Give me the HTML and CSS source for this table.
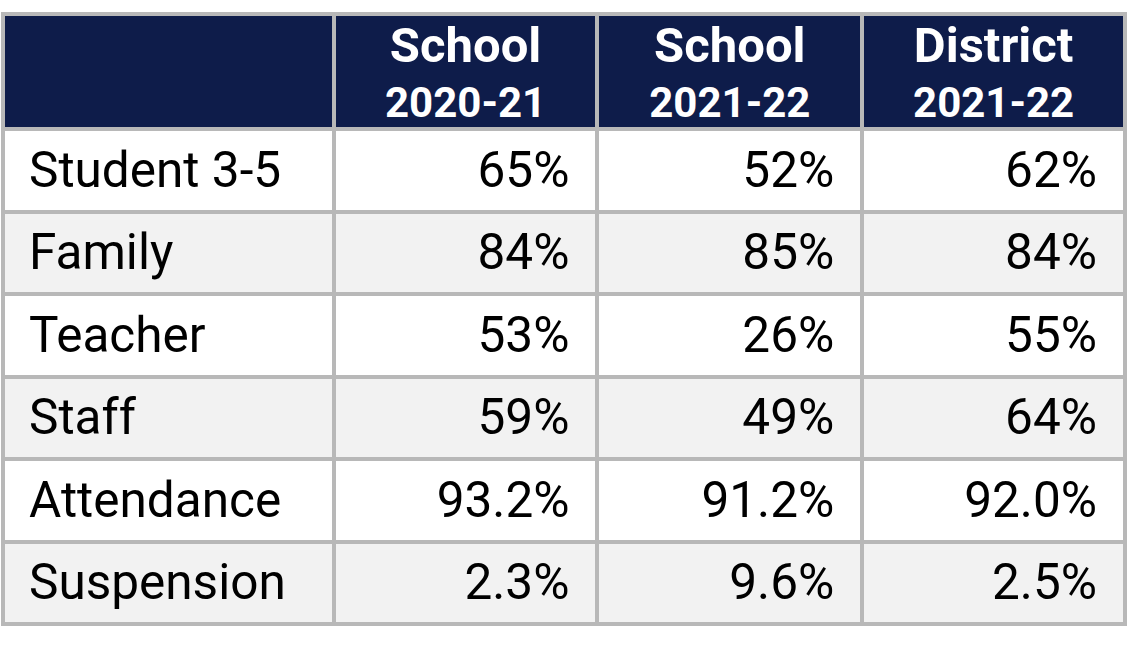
FILE: index.html
```html
<!DOCTYPE html>
<html>
<head>
<meta charset="utf-8">
<link rel="stylesheet" href="styles.css">
</head>
<body>
<table class="stats">
  <thead>
    <tr>
      <th class="corner"></th>
      <th><div class="h1">School</div><div class="h2">2020-21</div></th>
      <th><div class="h1">School</div><div class="h2">2021-22</div></th>
      <th><div class="h1">District</div><div class="h2">2021-22</div></th>
    </tr>
  </thead>
  <tbody>
    <tr class="odd"><td>Student 3-5</td><td>65%</td><td>52%</td><td>62%</td></tr>
    <tr class="even"><td>Family</td><td>84%</td><td>85%</td><td>84%</td></tr>
    <tr class="odd"><td>Teacher</td><td>53%</td><td>26%</td><td>55%</td></tr>
    <tr class="even"><td>Staff</td><td>59%</td><td>49%</td><td>64%</td></tr>
    <tr class="odd"><td>Attendance</td><td>93.2%</td><td>91.2%</td><td>92.0%</td></tr>
    <tr class="even"><td>Suspension</td><td>2.3%</td><td>9.6%</td><td>2.5%</td></tr>
  </tbody>
</table>
</body>
</html>
```
FILE: styles.css
```css
html, body {
  margin: 0;
  padding: 0;
  background: #ffffff;
}
body {
  padding: 12px 0 0 1px;
  font-family: Roboto, "Liberation Sans", sans-serif;
}
.stats {
  border-collapse: separate;
  border-spacing: 0;
  border-top: 4px solid #b8b8b8;
  border-left: 4px solid #b8b8b8;
  table-layout: fixed;
  width: 1126px;
}
.stats th, .stats td {
  border-right: 4px solid #b8b8b8;
  border-bottom: 4px solid #b8b8b8;
  padding: 0;
}
.stats th:nth-child(1), .stats td:nth-child(1) { width: 326px; }
.stats th:nth-child(2), .stats td:nth-child(2) { width: 260px; }
.stats th:nth-child(3), .stats td:nth-child(3) { width: 261px; }
.stats th:nth-child(4), .stats td:nth-child(4) { width: 259px; }
.stats th {
  background: #0e1c4a;
  color: #ffffff;
  height: 115px;
  vertical-align: top;
  text-align: center;
  font-weight: 700;
  padding-top: 5px;
  box-sizing: border-box;
}
.h1 {
  font-size: 49px;
  line-height: 49px;
}
.h2 {
  font-size: 42px;
  line-height: 42px;
  margin-top: 12px;
}
.stats td {
  height: 78px;
  font-size: 49.5px;
  color: #000000;
  text-align: right;
  vertical-align: middle;
  padding-right: 26px;
  line-height: 1;
}
.stats tr:nth-child(odd) td { height: 79px; }
.stats td:first-child {
  text-align: left;
  padding-left: 24px;
  padding-right: 0;
}
.odd td { background: #ffffff; }
.even td { background: #f2f2f2; }
```
